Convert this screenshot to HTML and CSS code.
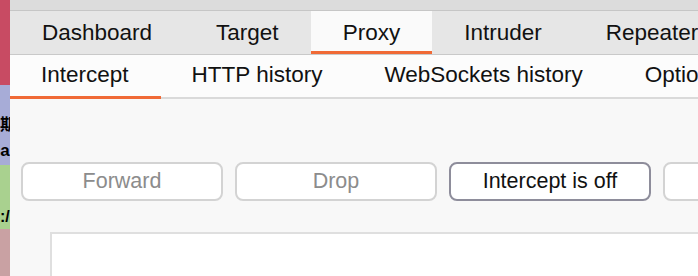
FILE: index.html
```html
<!DOCTYPE html>
<html>
<head>
<meta charset="utf-8">
<link rel="stylesheet" href="styles.css">
</head>
<body>
<div class="strip">
  <div class="seg seg-red"></div>
  <div class="seg seg-blue">
    <span class="cut cut-1">日期</span>
    <span class="cut cut-2">Da</span>
  </div>
  <div class="seg seg-green">
    <span class="cut cut-3">s:/</span>
  </div>
  <div class="seg seg-rose"></div>
</div>
<div class="main">
  <div class="topbar"></div>
  <div class="tabs">
    <div class="tab">Dashboard</div>
    <div class="tab">Target</div>
    <div class="tab active">Proxy</div>
    <div class="tab">Intruder</div>
    <div class="tab">Repeater</div>
    <div class="tab">Sequencer</div>
  </div>
  <div class="subtabs">
    <div class="subtab active">Intercept</div>
    <div class="subtab">HTTP history</div>
    <div class="subtab">WebSockets history</div>
    <div class="subtab">Options</div>
  </div>
  <div class="content">
    <div class="buttons">
      <div class="btn disabled">Forward</div>
      <div class="btn disabled">Drop</div>
      <div class="btn primary">Intercept is off</div>
      <div class="btn disabled">Action</div>
    </div>
    <div class="editor"></div>
  </div>
</div>
</body>
</html>
```
FILE: styles.css
```css
html, body {
  margin: 0;
  padding: 0;
}
body {
  width: 698px;
  height: 276px;
  overflow: hidden;
  display: flex;
  font-family: "Liberation Sans", Arial, sans-serif;
  color: #111;
  background: #f8f8f8;
}
.strip {
  width: 10px;
  flex: none;
  display: flex;
  flex-direction: column;
  overflow: hidden;
}
.seg {
  display: flex;
  flex-direction: column;
  overflow: hidden;
}
.seg-red { height: 85px; background: #c84b63; }
.seg-blue { height: 80px; background: #a7acd7; }
.seg-green { height: 64px; background: #a9d18f; }
.seg-rose { flex: 1; background: #c9a1a3; }
.cut {
  font-family: "Liberation Sans", "Noto Sans CJK SC", sans-serif;
  font-weight: bold;
  font-size: 16px;
  line-height: 20px;
  white-space: nowrap;
  color: #000;
}
.cut-1 { margin-top: 30px; margin-left: -16px; }
.cut-2 { margin-top: 6px; margin-left: -12px; font-size: 17px; }
.cut-3 { margin-top: 42px; margin-left: -9px; }
.main {
  flex: 1;
  min-width: 0;
  display: flex;
  flex-direction: column;
  overflow: hidden;
}
.topbar {
  height: 10px;
  flex: none;
  background: #dcdcdc;
  border-bottom: 1px solid #c6c6c6;
}
.tabs {
  height: 43px;
  flex: none;
  display: flex;
  background: #e6e6e6;
  border-bottom: 1px solid #c9c9c9;
  white-space: nowrap;
}
.tab {
  font-size: 22.5px;
  line-height: 43px;
  padding: 0 32px;
  flex: none;
}
.tab.active {
  background: #fafafa;
  box-shadow: inset 0 -3px 0 #f06a36;
}
.subtabs {
  height: 42px;
  flex: none;
  display: flex;
  background: #fcfcfc;
  border-bottom: 2px solid #dadada;
  white-space: nowrap;
}
.subtab {
  font-size: 22.5px;
  line-height: 40px;
  padding: 0 31px;
  flex: none;
}
.subtab.active {
  height: 41px;
  padding: 0 32px 0 31px;
  border-bottom: 3px solid #f06a36;
}
.content {
  flex: 1;
  display: flex;
  flex-direction: column;
  background: #f8f8f8;
}
.buttons {
  display: flex;
  gap: 12px;
  padding: 63px 0 0 11px;
  height: 39px;
}
.btn {
  flex: none;
  width: 202px;
  height: 39px;
  box-sizing: border-box;
  border: 2px solid #d3d3d3;
  border-radius: 8px;
  background: #fff;
  font-size: 21.5px;
  line-height: 35px;
  text-align: center;
  color: #8c8c8c;
}
.btn.primary {
  border-color: #8e8d9b;
  color: #111;
}
.btn.disabled:last-child {
  color: transparent;
}
.editor {
  flex: 1;
  margin: 31px 0 0 40px;
  background: #fff;
  border-top: 2px solid #dfdfdf;
  border-left: 2px solid #dfdfdf;
}
```
